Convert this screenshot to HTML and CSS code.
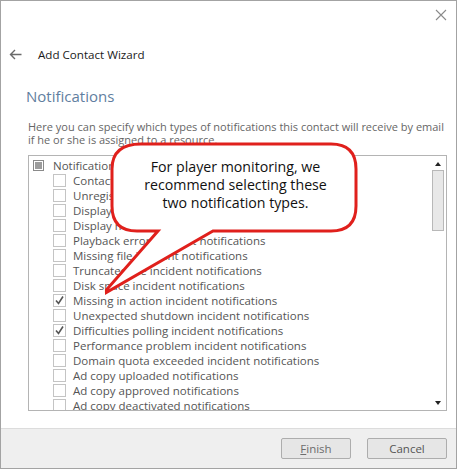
FILE: index.html
```html
<!DOCTYPE html>
<html lang="en">
<head>
    <meta charset="UTF-8">
    <title>Add Contact Wizard</title>
    <link rel="stylesheet" href="styles.css">
</head>
<body>
    <div class="window">
        <div class="titlebar">
            <svg class="close" width="12" height="12" viewBox="0 0 12 12">
                <path d="M1 1 L11 11 M11 1 L1 11" stroke="#8a8a8a" stroke-width="1.1" fill="none"/>
            </svg>
        </div>

        <div class="header">
            <svg class="back" width="13" height="11" viewBox="0 0 13 11">
                <path d="M12.5 5.5 H1.5 M6 1 L1.5 5.5 L6 10" stroke="#6a6a6a" stroke-width="1.4" fill="none"/>
            </svg>
            <span class="wizard-title">Add Contact Wizard</span>
        </div>

        <div class="content">
            <h1>Notifications</h1>
            <p class="desc">Here you can specify which types of notifications this contact will receive by email if he or she is assigned to a resource.</p>

            <div class="listbox">
                <div class="items">
                    <div class="row parent"><span class="tri"><span></span></span>Notifications</div>
                    <div class="row"><span class="box"></span>Contact notifications</div>
                    <div class="row"><span class="box"></span>Unregistered player notifications</div>
                    <div class="row"><span class="box"></span>Display notifications</div>
                    <div class="row"><span class="box"></span>Display monitoring notifications</div>
                    <div class="row"><span class="box"></span>Playback error incident notifications</div>
                    <div class="row"><span class="box"></span>Missing file incident notifications</div>
                    <div class="row"><span class="box"></span>Truncated file incident notifications</div>
                    <div class="row"><span class="box"></span>Disk space incident notifications</div>
                    <div class="row"><span class="box checked"><svg width="11" height="11" viewBox="0 0 11 11"><path d="M2 5.5 L4.5 8.5 L9 1.5" stroke="#555" stroke-width="1.6" fill="none"/></svg></span>Missing in action incident notifications</div>
                    <div class="row"><span class="box"></span>Unexpected shutdown incident notifications</div>
                    <div class="row"><span class="box checked"><svg width="11" height="11" viewBox="0 0 11 11"><path d="M2 5.5 L4.5 8.5 L9 1.5" stroke="#555" stroke-width="1.6" fill="none"/></svg></span>Difficulties polling incident notifications</div>
                    <div class="row"><span class="box"></span>Performance problem incident notifications</div>
                    <div class="row"><span class="box"></span>Domain quota exceeded incident notifications</div>
                    <div class="row"><span class="box"></span>Ad copy uploaded notifications</div>
                    <div class="row"><span class="box"></span>Ad copy approved notifications</div>
                    <div class="row"><span class="box"></span>Ad copy deactivated notifications</div>
                </div>
                <div class="scrollbar">
                    <span class="arrow-up"></span>
                    <span class="thumb"></span>
                    <span class="arrow-down"></span>
                </div>
            </div>
        </div>

        <div class="footer">
            <button class="btn" disabled><u>F</u>inish</button>
            <button class="btn">Cancel</button>
        </div>

        <div class="callout">
            <svg width="260" height="165" viewBox="0 0 260 165">
                <path d="M32 3 H222 Q247 3 247 28 V65 Q247 90 222 90 H104 L-7 154 L49 90 H28 Q3 90 3 65 V28 Q3 3 32 3 Z"
                      transform="translate(4 0)" fill="#fff" stroke="#e0201c" stroke-width="3" stroke-linejoin="miter"/>
            </svg>
            <div class="callout-text">For player monitoring, we<br>recommend selecting these<br>two notification types.</div>
        </div>
    </div>
</body>
</html>
```

FILE: styles.css
```css
body {
    margin: 0;
    font-family: "Open Sans", "Noto Sans", sans-serif;
}
.window {
    position: relative;
    width: 457px;
    height: 469px;
    box-sizing: border-box;
    border: 1px solid #a3a3a3;
    display: flex;
    flex-direction: column;
    background: #fff;
}
.titlebar {
    height: 39px;
    display: flex;
    justify-content: flex-end;
    align-items: flex-start;
}
.close {
    margin: 8px 9px 0 0;
}
.header {
    display: flex;
    align-items: center;
    height: 28px;
    padding-left: 8px;
}
.back {
    margin-right: 16px;
}
.wizard-title {
    font-size: 11.6px;
    color: #1a1a1a;
}
.content {
    padding: 0 9px 0 27px;
    flex: 1;
}
h1 {
    margin: 18px 0 0 -2px;
    font-size: 15px;
    font-weight: normal;
    color: #5f7ea0;
    line-height: 20px;
}
.desc {
    margin: 14px 0 0 0;
    font-size: 11px;
    line-height: 13px;
    color: #666;
}
.listbox {
    margin-top: 9px;
    height: 256px;
    border: 1px solid #b4b4b4;
    box-sizing: border-box;
    display: flex;
    overflow: hidden;
}
.items {
    flex: 1;
    padding-top: 2px;
}
.row {
    height: 15px;
    display: flex;
    align-items: center;
    padding-left: 24px;
    font-size: 11.5px;
    color: #555;
    white-space: nowrap;
}
.row.parent {
    padding-left: 4px;
}
.box {
    width: 11px;
    height: 11px;
    border: 1px solid #c4c4c4;
    margin-right: 7px;
    flex: none;
    display: flex;
}
.tri {
    width: 9px;
    height: 9px;
    border: 1px solid #8a8a8a;
    margin-right: 9px;
    display: flex;
    align-items: center;
    justify-content: center;
    flex: none;
}
.tri span {
    width: 7px;
    height: 7px;
    background: #9c9c9c;
}
.scrollbar {
    width: 16px;
    display: flex;
    flex-direction: column;
    align-items: center;
    padding-top: 6px;
    padding-bottom: 5px;
}
.arrow-up {
    border-left: 3.5px solid transparent;
    border-right: 3.5px solid transparent;
    border-bottom: 4px solid #222;
}
.thumb {
    width: 12px;
    height: 61px;
    margin-top: 4px;
    background: #e8e8e8;
    border: 1px solid #b8b8b8;
    box-sizing: border-box;
}
.arrow-down {
    margin-top: auto;
    border-left: 3.5px solid transparent;
    border-right: 3.5px solid transparent;
    border-top: 4px solid #222;
}
.footer {
    height: 39px;
    background: #efefef;
    border-top: 1px solid #dcdcdc;
    display: flex;
    justify-content: flex-end;
    align-items: center;
    gap: 16px;
    padding-right: 9px;
}
.btn {
    height: 21px;
    width: 70px;
    padding: 0;
    background: #e6e6e6;
    border: 1px solid #adadad;
    border-radius: 2px;
    font-family: "Open Sans", "Noto Sans", sans-serif;
    font-size: 11.5px;
    color: #555;
}
.btn + .btn {
    width: 80px;
}
.btn:disabled {
    color: #6d6d6d;
}
.callout {
    position: absolute;
    left: 104px;
    top: 140px;
    width: 260px;
    height: 165px;
}
.callout svg {
    position: absolute;
    left: 0;
    top: 0;
}
.callout-text {
    position: absolute;
    left: 7px;
    top: 17px;
    width: 247px;
    text-align: center;
    font-size: 14.2px;
    line-height: 18px;
    color: #111;
}
```
